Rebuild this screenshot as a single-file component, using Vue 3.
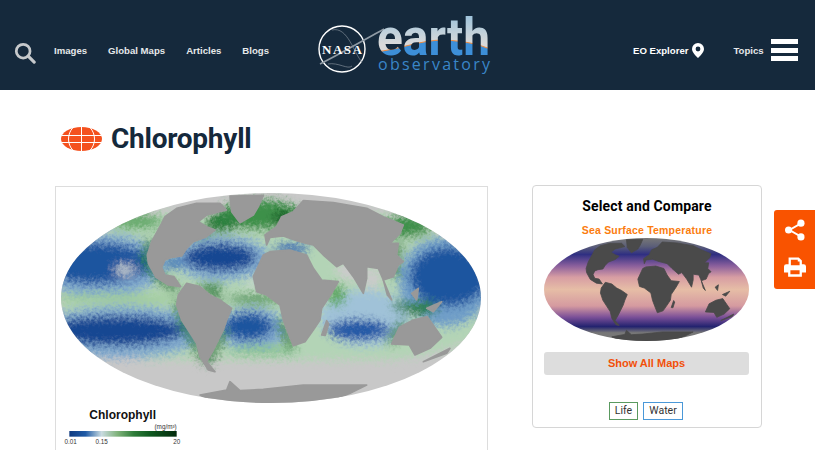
<script setup>
const land = [
  'M345,110 L380,85 L440,70 L510,70 L530,90 L470,105 L445,125 L470,140 L495,150 L470,170 L430,185 L410,205 L395,228 L365,232 L345,240 L335,262 L345,285 L372,290 L392,320 L355,315 L318,292 L295,250 L292,225 L305,185 L335,130 Z',
  'M385,345 L410,310 L450,320 L480,345 L510,360 L545,385 L530,420 L520,450 L490,510 L470,545 L495,575 L475,570 L450,530 L440,490 L395,420 L380,375 Z',
  'M610,290 L640,225 L660,215 L720,210 L770,225 L790,265 L815,300 L865,305 L845,340 L815,385 L810,420 L790,450 L765,485 L730,497 L715,460 L700,420 L690,375 L650,345 L620,335 Z',
  'M650,195 L660,172 L700,168 L740,182 L770,190 L790,195 L820,225 L860,260 L880,250 L910,290 L940,340 L950,295 L950,260 L985,265 L1000,300 L1030,290 L1045,255 L1060,245 L1040,225 L1045,190 L1020,190 L1050,160 L1060,135 L1000,110 L950,85 L850,68 L760,62 L730,95 L695,110 L680,140 L645,165 Z',
  'M1025,492 L1048,442 L1090,420 L1132,410 L1175,472 L1140,505 L1095,525 L1078,495 Z',
  'M450,645 L530,630 L540,605 L570,632 L640,628 L760,615 L950,615 L900,640 L800,680 L520,680 Z',
  'M540,48 L640,46 L625,80 L610,105 L570,128 L545,95 Z',
  'M815,465 L830,422 L836,432 L826,466 Z',
  'M1130,385 L1175,365 L1150,395 Z',
  'M1085,340 L1105,325 L1100,360 Z',
  'M1120,545 L1200,505 L1190,520 Z',
  'M1000,300 L1025,360 L1012,345 Z'
]
const blobs = [
  { cx: 150, cy: 255, rx: 200, ry: 95, fill: '#7fa8cd' },
  { cx: 1185, cy: 305, rx: 140, ry: 135, fill: '#6f9ec8' },
  { cx: 515, cy: 235, rx: 145, ry: 68, fill: '#7fa8cd' },
  { cx: 215, cy: 455, rx: 255, ry: 78, fill: '#7fa8cd' },
  { cx: 605, cy: 445, rx: 105, ry: 64, fill: '#7fa8cd' },
  { cx: 945, cy: 415, rx: 135, ry: 85, fill: '#a0c2d8' },
  { cx: 140, cy: 250, rx: 165, ry: 62, fill: '#1f559f' },
  { cx: 1195, cy: 290, rx: 115, ry: 88, fill: '#1f559f' },
  { cx: 510, cy: 232, rx: 108, ry: 40, fill: '#144792' },
  { cx: 200, cy: 452, rx: 200, ry: 44, fill: '#144792' },
  { cx: 595, cy: 440, rx: 72, ry: 40, fill: '#1f559f' },
  { cx: 925, cy: 450, rx: 95, ry: 30, fill: '#2459a6' },
  { cx: 725, cy: 205, rx: 55, ry: 17, fill: '#2f6bb2' },
  { cx: 370, cy: 250, rx: 32, ry: 18, fill: '#3f7ab8' },
  { cx: 200, cy: 356, rx: 195, ry: 16, fill: '#a0cc9c' },
  { cx: 620, cy: 357, rx: 90, ry: 12, fill: '#3c8f48' },
  { cx: 630, cy: 105, rx: 125, ry: 45, fill: '#3e9048' },
  { cx: 520, cy: 125, rx: 52, ry: 30, fill: '#2f8240' },
  { cx: 700, cy: 115, rx: 30, ry: 22, fill: '#125f28' },
  { cx: 1070, cy: 140, rx: 72, ry: 32, fill: '#3e9048' },
  { cx: 260, cy: 125, rx: 80, ry: 20, fill: '#5fa865' },
  { cx: 1110, cy: 385, rx: 52, ry: 20, fill: '#2f8240' },
  { cx: 860, cy: 345, rx: 27, ry: 32, fill: '#5fa865' },
  { cx: 480, cy: 325, rx: 42, ry: 12, fill: '#3c8f48' },
  { cx: 640, cy: 512, rx: 105, ry: 16, fill: '#8ec496' },
  { cx: 900, cy: 270, rx: 40, ry: 30, fill: '#cbcbcb' },
  { cx: 965, cy: 295, rx: 27, ry: 32, fill: '#cbcbcb' },
  { cx: 225, cy: 270, rx: 32, ry: 15, fill: '#c5cfd2' },
  { cx: 640, cy: 310, rx: 55, ry: 20, fill: '#c2d6c8' }
]
const coasts = [
  'M300,180 L285,240 L325,295 L385,330',
  'M380,365 L405,440 L445,510 L470,545',
  'M525,450 L490,520 L475,545',
  'M690,420 L725,505',
  'M1050,190 L1030,250 L1040,290',
  'M1030,375 L1090,390 L1150,380',
  'M1020,490 L1060,425',
  'M440,165 L520,130',
  'M470,320 L510,360'
]
</script>

<template>
  <div class="page">
    <header class="top">
      <div class="left">
        <svg class="search" viewBox="0 0 24 24" width="22" height="22" aria-hidden="true">
          <circle cx="10" cy="10" r="7.5" fill="none" stroke="#c6c9cc" stroke-width="3" />
          <path d="M15.5 15.5 L22 22" stroke="#c6c9cc" stroke-width="3.4" stroke-linecap="round" />
        </svg>
        <nav class="nav">
          <a>Images</a><a>Global Maps</a><a>Articles</a><a>Blogs</a>
        </nav>
      </div>
      <svg class="logo" viewBox="0 0 180 90" width="180" height="90" role="img" aria-label="NASA Earth Observatory">
        <defs>
          <linearGradient id="earthTop" gradientUnits="userSpaceOnUse" x1="0" y1="16" x2="0" y2="44">
            <stop offset="0" stop-color="#9fc4dc" />
            <stop offset="1" stop-color="#dadada" />
          </linearGradient>
          <pattern id="earthFill" patternUnits="userSpaceOnUse" x="0" y="0" width="180" height="90">
            <rect width="180" height="90" fill="url(#earthTop)" />
            <path d="M60,52 C85,50 105,40 130,40 C150,41 165,44 178,50 V60 H60 Z" fill="#3d8fd8" />
            <path d="M60,52 C85,50 105,40 130,40 C150,41 165,44 178,50" fill="none" stroke="#f08a3c" stroke-width="1" />
          </pattern>
        </defs>
        <circle cx="28" cy="49" r="23" fill="#15293c" stroke="#fff" stroke-width="1.400" />
        <path d="M6,64 C26,54 50,40 70,29" fill="none" stroke="#8f9aa4" stroke-width="1.600" />
        <path d="M18,30 C34,26 40,54 48,62 M14,64 C24,62 34,70 38,66" fill="none" stroke="#7f8b96" stroke-width=".7" />
        <text x="28" y="53.500" text-anchor="middle" class="nasa" textLength="40">NASA</text>
        <text x="63" y="55" class="earth" fill="url(#earthFill)" textLength="113" lengthAdjust="spacingAndGlyphs">earth</text>
        <text x="64" y="69.500" class="obs" textLength="112">observatory</text>
      </svg>
      <div class="right">
        <a class="eo">EO Explorer</a>
        <svg class="pin" viewBox="0 0 12 15" width="12" height="15" aria-hidden="true">
          <path fill="#fff" fill-rule="evenodd" d="M6 0a6 6 0 0 1 6 6c0 3.500-4 7-6 9-2-2-6-5.500-6-9a6 6 0 0 1 6-6Zm0 3.600a2.400 2.400 0 1 0 0 4.800 2.400 2.400 0 0 0 0-4.800Z" />
        </svg>
        <a class="topics">Topics</a>
        <div class="burger"><span></span><span></span><span></span></div>
      </div>
    </header>

    <main class="main">
      <div class="title-row">
        <svg class="globe" viewBox="0 0 41 24" width="41" height="24" aria-hidden="true">
          <ellipse cx="20.500" cy="12" rx="20.500" ry="12" fill="#f4511e" />
          <path d="M1 8.500 H40 M1 15.500 H40 M20.500 0 V24 M12 .5 C6 7 6 17 12 23.500 M29 .5 C35 7 35 17 29 23.500" fill="none" stroke="#fff" stroke-width="1" />
        </svg>
        <h1>Chlorophyll</h1>
      </div>

      <div class="content">
        <figure class="figure">
          <svg class="map" viewBox="18 21 1293 789" width="431" height="263" role="img" aria-label="Chlorophyll map">
            <defs>
              <clipPath id="mapClip"><ellipse cx="663" cy="354" rx="630" ry="315" /></clipPath>
              <filter id="rough" x="-10%" y="-10%" width="120%" height="120%">
                <feGaussianBlur in="SourceGraphic" stdDeviation="13" result="soft" />
                <feTurbulence type="fractalNoise" baseFrequency="0.11" numOctaves="3" seed="4" result="noise" />
                <feDisplacementMap in="soft" in2="noise" scale="38" xChannelSelector="R" yChannelSelector="G" />
                <feGaussianBlur stdDeviation="1" />
              </filter>
              <linearGradient id="scale" x1="0" y1="0" x2="1" y2="0">
                <stop offset="0" stop-color="#0f3a80" />
                <stop offset=".15" stop-color="#1f5aa6" />
                <stop offset=".3" stop-color="#c9dbe0" />
                <stop offset=".45" stop-color="#7fb27a" />
                <stop offset=".6" stop-color="#2f7d3a" />
                <stop offset=".75" stop-color="#0f5a20" />
                <stop offset="1" stop-color="#032a0c" />
              </linearGradient>
            </defs>
            <g clip-path="url(#mapClip)">
              <rect x="18" y="21" width="1293" height="789" fill="#c8c8c8" />
              <g filter="url(#rough)">
                <path d="M30,240 C120,150 250,100 340,100 L1000,100 C1100,110 1200,170 1300,240 L1300,470 C1200,510 1100,535 1000,540 L300,540 C200,530 100,500 30,460 Z" fill="#b3d4b6" />
                <ellipse v-for="(b, i) in blobs" :key="i" :cx="b.cx" :cy="b.cy" :rx="b.rx" :ry="b.ry" :fill="b.fill" />
                <path v-for="(c, i) in coasts" :key="'c' + i" :d="c" fill="none" stroke="#1a7a35" stroke-width="22" />
              </g>
              <path v-for="(d, i) in land" :key="'l' + i" :d="d" fill="#999" stroke="#999" stroke-width="5" stroke-linejoin="round" />
            </g>
            <text x="218" y="717" text-anchor="middle" class="leg-title">Chlorophyll</text>
            <text x="380" y="746" text-anchor="end" class="leg-small">(mg/m³)</text>
            <rect x="58" y="753" width="322" height="17" fill="url(#scale)" />
            <text x="62" y="792" text-anchor="middle" class="leg-small">0.01</text>
            <text x="155" y="792" text-anchor="middle" class="leg-small">0.15</text>
            <text x="380" y="792" text-anchor="middle" class="leg-small">20</text>
          </svg>
        </figure>

        <aside class="card">
          <h2>Select and Compare</h2>
          <p class="sst">Sea Surface Temperature</p>
          <svg class="sst-map" viewBox="0 0 205 103" width="205" height="103" role="img" aria-label="Sea surface temperature map">
            <defs>
              <linearGradient id="sstFill" x1="0" y1="0" x2="0" y2="1">
                <stop offset="0" stop-color="#777" />
                <stop offset=".08" stop-color="#5c5f78" />
                <stop offset=".16" stop-color="#2f2f82" />
                <stop offset=".27" stop-color="#8a5f9c" />
                <stop offset=".38" stop-color="#d79da3" />
                <stop offset=".5" stop-color="#e6bda6" />
                <stop offset=".66" stop-color="#d59aa0" />
                <stop offset=".77" stop-color="#7a4f98" />
                <stop offset=".86" stop-color="#23236f" />
                <stop offset=".92" stop-color="#777" />
                <stop offset="1" stop-color="#777" />
              </linearGradient>
              <clipPath id="sstClip"><ellipse cx="102.500" cy="51.500" rx="102.500" ry="51.500" /></clipPath>
            </defs>
            <g clip-path="url(#sstClip)">
              <rect width="205" height="103" fill="url(#sstFill)" />
              <g transform="translate(-5.400,-6.100) scale(.1627)">
                <path v-for="(d, i) in land" :key="'s' + i" :d="d" fill="#4a4a4a" stroke="#4a4a4a" stroke-width="5" stroke-linejoin="round" />
              </g>
            </g>
          </svg>
          <button class="show">Show All Maps</button>
          <div class="chips">
            <span class="chip life">Life</span>
            <span class="chip water">Water</span>
          </div>
        </aside>
      </div>
    </main>

    <div class="share">
      <svg viewBox="0 0 24 24" width="22" height="22" aria-hidden="true">
        <path d="M18 5 L6 12 L18 19" fill="none" stroke="#fff" stroke-width="2" />
        <circle cx="18.500" cy="4.500" r="3.900" fill="#fff" />
        <circle cx="5" cy="12" r="3.900" fill="#fff" />
        <circle cx="18.500" cy="19.500" r="3.900" fill="#fff" />
      </svg>
      <svg viewBox="0 0 24 24" width="22" height="22" aria-hidden="true">
        <path fill="#fff" fill-rule="evenodd" d="M5 1.500 H16 L19.500 5 V9 H21.500 A2.500 2.500 0 0 1 24 11.500 V18 H19.500 V22.500 H4.500 V18 H0 V11.500 A2.500 2.500 0 0 1 2.500 9 H5 Z M7.500 4 V10 H17 V6 H15 V4 Z M7 15.500 V20 H17 V15.500 Z" />
      </svg>
    </div>
  </div>
</template>

<style>
html, body { overflow: hidden; background: #fff; }
</style>

<style scoped>
.page { position: relative; width: 815px; height: 450px; overflow: hidden; font-family: "Liberation Sans", Arial, sans-serif; background: #fff; }
.top { height: 90px; background: #15293c; display: flex; }
.left { display: flex; align-items: center; width: 314px; height: 100%; padding: 10px 0 0 14px; box-sizing: border-box; flex: none; }
.search { margin-top: 6px; }
.nav { display: flex; gap: 21px; margin-left: 18px; font-size: 9.600px; font-weight: 700; color: #e6e8ea; }
.logo { flex: none; }
.right { display: flex; align-items: center; height: 100%; padding-top: 10px; box-sizing: border-box; margin-left: 139px; color: #fff; font-size: 9.600px; font-weight: 700; }
.pin { margin-left: 4px; }
.topics { margin-left: 29px; color: #e6e8ea; }
.burger { display: flex; flex-direction: column; gap: 3.500px; margin-left: 7px; }
.burger span { display: block; width: 27px; height: 5px; background: #fff; }
.main { padding: 0 53px 0 55px; }
.title-row { display: flex; align-items: center; height: 96px; padding: 1px 0 0 6px; box-sizing: border-box; gap: 9px; }
h1 { margin: 0; font: 700 28px/1 Roboto, "Liberation Sans", sans-serif; color: #15293c; letter-spacing: -.25px; }
.content { display: flex; align-items: flex-start; gap: 44px; }
.figure { margin: 0; width: 433px; height: 264px; box-sizing: border-box; border: 1px solid #ddd; border-bottom: 0; flex: none; }
.map { display: block; }
.leg-title { font: 700 36px "Liberation Sans", sans-serif; fill: #111; }
.leg-small { font: 19px "Liberation Sans", sans-serif; fill: #333; }
.nasa { font: 700 13px "Liberation Serif", serif; fill: #fff; }
.earth { font: 700 52px Roboto, sans-serif; }
.obs { font: 500 16px "Open Sans", sans-serif; fill: #3a86c8; }
.card { width: 230px; height: 243px; margin-top: -1px; box-sizing: border-box; border: 1px solid #d6d6d6; border-radius: 4px; padding: 0 11px; text-align: center; }
.card h2 { margin: 12px 0 0; font: 700 14px/17px Roboto, sans-serif; color: #000; letter-spacing: .15px; }
.sst { margin: 8px 0 0; font-size: 10.500px; line-height: 14px; font-weight: 700; color: #fb7c0e; letter-spacing: .2px; }
.sst-map { display: block; margin-top: 1px; }
.show { display: block; width: 205px; height: 23px; margin-top: 11px; border: 0; border-radius: 3px; background: #ddd; color: #f2500a; font: 700 11px "Liberation Sans", sans-serif; padding: 0 0 1px; }
.chips { display: flex; justify-content: center; gap: 5px; margin-top: 27px; padding-right: 2px; }
.chip { height: 18px; box-sizing: border-box; font: 400 10.500px/16px Roboto, sans-serif; color: #333; border: 1px solid; }
.life { border-color: #5a9a60; width: 29px; }
.water { border-color: #4a98d8; width: 40px; }
.share { position: absolute; left: 774px; top: 210px; width: 41px; height: 79px; background: #f95300; border-radius: 3px 0 0 3px; display: flex; flex-direction: column; align-items: center; padding-top: 9px; gap: 15px; box-sizing: border-box; }
</style>
